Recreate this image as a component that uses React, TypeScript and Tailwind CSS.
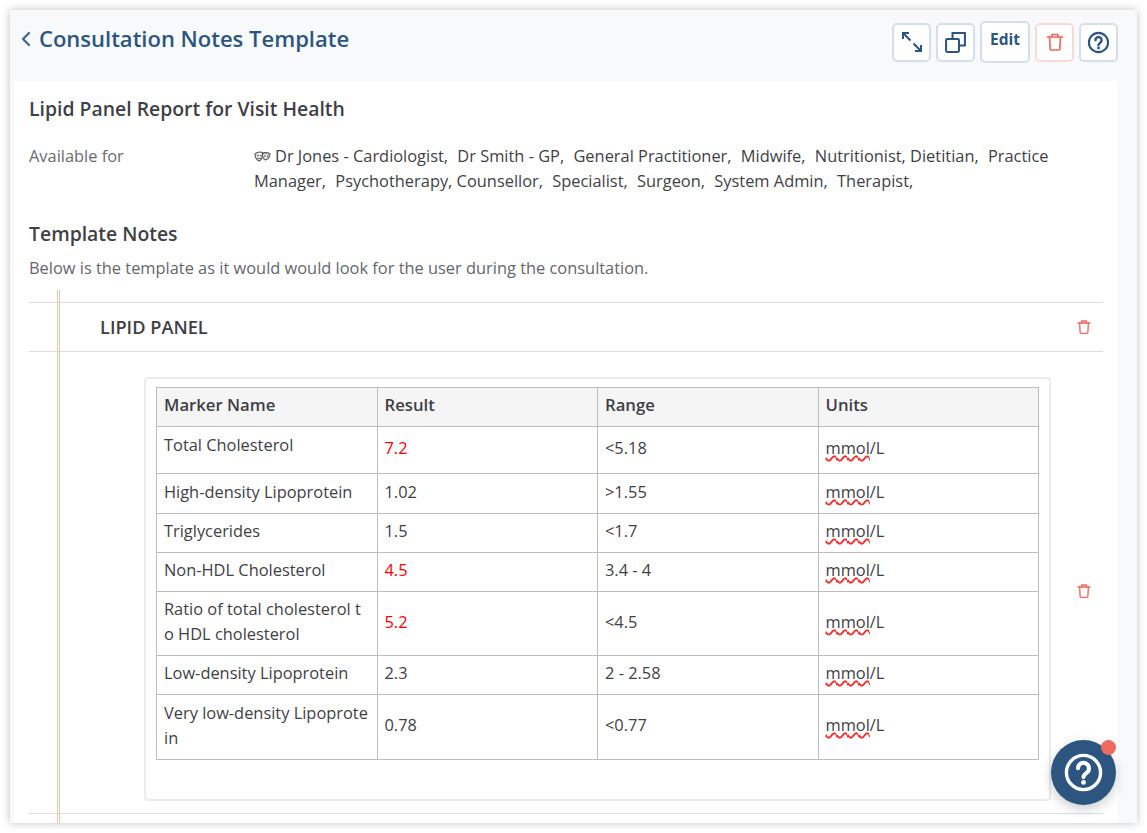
import { ChevronLeft } from 'lucide-react';

const MARKERS = [
  { name: 'Total Cholesterol', result: '7.2', range: '<5.18', high: true, rowClass: 'h-[47px]', top: true },
  { name: 'High-density Lipoprotein', result: '1.02', range: '>1.55', rowClass: 'h-[40px]' },
  { name: 'Triglycerides', result: '1.5', range: '<1.7', rowClass: 'h-[39px]' },
  { name: 'Non-HDL Cholesterol', result: '4.5', range: '3.4 - 4', high: true, rowClass: 'h-[39px]' },
  { name: 'Ratio of total cholesterol to HDL cholesterol', result: '5.2', range: '<4.5', high: true, rowClass: 'h-[64px]' },
  { name: 'Low-density Lipoprotein', result: '2.3', range: '2 - 2.58', rowClass: 'h-[39px]' },
  { name: 'Very low-density Lipoprotein', result: '0.78', range: '<0.77', rowClass: 'h-[65px]' },
];

const ROLES = [
  'Dr Jones - Cardiologist,',
  'Dr Smith - GP,',
  'General Practitioner,',
  'Midwife,',
  'Nutritionist, Dietitian,',
  'Practice Manager,',
  'Psychotherapy, Counsellor,',
  'Specialist,',
  'Surgeon,',
  'System Admin,',
  'Therapist,',
];

function MasksIcon() {
  return (
    <svg width="17" height="12" viewBox="0 0 17 12" fill="none" stroke="#555" strokeWidth="1.1" className="mr-[4px] inline-block align-[-1px]">
      <path d="M8 3c2-1.500 5.500-1.500 8 0-.5 3-2 5.500-4.500 6C9.500 8.500 8.500 6 8 3z" fill="#ddd" />
      <path d="M1 3c2-1.800 5-2.300 7.500-1.500.3 3-.6 6.500-3 8.500C2.800 9.500 1.200 6.500 1 3z" fill="#eee" />
      <path d="M2.800 4.800l2-.3M6 4.500l1.500-.3M3.500 7.200c1 .5 2 .4 3-.3M10 5h1.500M13 5h1.500" />
    </svg>
  );
}

function TrashIcon({ size, className = '' }: { size: number; className?: string }) {
  return (
    <svg width={size} height={size} viewBox="0 0 20 20" fill="none" stroke="currentColor" strokeWidth="1.700" strokeLinejoin="round" strokeLinecap="round" className={className}>
      <path d="M2.500 5h15" />
      <path d="M7 5V2.500h6V5" />
      <path d="M4.500 5l.7 12c0 .6.5 1 1 1h7.600c.5 0 1-.4 1-1l.7-12" />
    </svg>
  );
}

function ExpandIcon() {
  return (
    <svg width="22" height="22" viewBox="0 0 22 22" fill="none" stroke="currentColor" strokeWidth="2">
      <path d="M2 8V2h6M2 2l7.500 7.500" />
      <path d="M20 14v6h-6M20 20l-7.500-7.500" />
    </svg>
  );
}

function CopyIcon() {
  return (
    <svg width="21" height="21" viewBox="0 0 19.500 19.500" fill="none" stroke="currentColor" strokeWidth="1.900">
      <rect x="1" y="6.500" width="12" height="12" rx="1" />
      <path d="M7 6.500V1h11.500v11.500H13" />
    </svg>
  );
}

function HelpIcon({ size, stroke }: { size: number; stroke: number }) {
  return (
    <svg width={size} height={size} viewBox="0 0 24 24" fill="none" stroke="currentColor" strokeWidth={stroke} strokeLinecap="round">
      <circle cx="12" cy="12" r="10" />
      <path d="M8.800 9.500a3.200 3.200 0 1 1 5 2.700c-1 .7-1.800 1.300-1.800 2.500" strokeWidth={stroke + 0.4} />
      <path d="M12 17.800v.01" strokeWidth={stroke + 0.8} />
    </svg>
  );
}

function ToolButton({ children, className = '' }: { children: React.ReactNode; className?: string }) {
  return (
    <button className={`flex h-[39px] w-[39px] items-center justify-center rounded-[5px] border-2 bg-white text-[#2c5680] ${className}`}>
      {children}
    </button>
  );
}

export default function App() {
  return (
    <div className="min-h-[833px] bg-white p-[10px] font-['Open_Sans','Noto_Sans',sans-serif] text-[#3f3f46]">
      <div className="h-[813px] overflow-hidden bg-[#f8f9fb] pr-[19px] pl-[4px] shadow-[0_0_8px_rgba(0,0,0,0.25)]">
        <div className="-ml-[4px] flex h-[71px] items-start justify-between pl-[4px]">
          <div className="mt-[14px] flex items-center">
            <ChevronLeft size={24} strokeWidth={2.300} className="text-[#44688f]" />
            <h1 className="ml-[1px] text-[22px] leading-[29px] font-semibold text-[#2c5680]">Consultation Notes Template</h1>
          </div>
          <div className="mt-[11px] flex items-center gap-[5px]">
            <ToolButton className="border-[#d5dfea]">
              <ExpandIcon />
            </ToolButton>
            <ToolButton className="border-[#d5dfea]">
              <CopyIcon />
            </ToolButton>
            <button className="flex h-[42px] w-[50px] items-center justify-center rounded-[5px] border-2 border-[#d5dfea] bg-white pb-[5px] text-[15.500px] font-bold text-[#2c5680]">
              Edit
            </button>
            <ToolButton className="border-[#fdd9d6]">
              <TrashIcon size={20} className="text-[#ee6a5f]" />
            </ToolButton>
            <ToolButton className="border-[#d5dfea]">
              <HelpIcon size={23} stroke={2.200} />
            </ToolButton>
          </div>
        </div>

        <div className="relative h-[742px] bg-white px-[15px]">
          <h2 className="pt-[14px] text-[19.400px] leading-[27px] font-semibold">Lipid Panel Report for Visit Health</h2>

          <div className="mt-[21px] flex text-[16.400px] leading-[25px]">
            <div className="w-[225px] shrink-0 text-[#6b6b70]">Available for</div>
            <div className="flex-1">
              <MasksIcon />
              {ROLES.map((role) => (
                <span key={role} className="mr-[5px]">{role} </span>
              ))}
            </div>
          </div>

          <h2 className="mt-[27px] text-[19.400px] leading-[27px] font-semibold">Template Notes</h2>
          <p className="mt-[9px] text-[16.400px] leading-[24px] text-[#66666b]">
            Below is the template as it would would look for the user during the consultation.
          </p>

          <div className="absolute top-[209px] bottom-0 left-[43px] w-[3px] border-x border-[#e6c6a4]" />

          <div className="mt-[22px] flex h-[50px] items-center justify-between border-y border-[#d9dfe5] pr-[11px] pl-[71px]">
            <span className="pt-[1px] text-[18.200px] font-semibold">LIPID PANEL</span>
            <TrashIcon size={16} className="text-[#ee6a5f]" />
          </div>

          <div className="flex border-b border-[#d9dfe5] pt-[25px] pb-[12px] pl-[115px]">
            <div className="h-[424px] w-[907px] rounded-[4px] border-2 border-[#e9edf2] px-[10px] pt-[8px]">
              <table className="w-[883px] table-fixed border-collapse text-[16.400px] leading-[25px] [word-break:break-all]">
                <thead>
                  <tr className="h-[39px] bg-[#f5f5f5] text-left text-[16.700px]">
                    {['Marker Name', 'Result', 'Range', 'Units'].map((h) => (
                      <th key={h} className="border border-[#bdbdbd] px-[7px] pb-[5px] font-semibold">{h}</th>
                    ))}
                  </tr>
                </thead>
                <tbody>
                  {MARKERS.map((m) => (
                    <tr key={m.name} className={m.rowClass}>
                      <td className={`border border-[#bdbdbd] px-[7px] ${m.top ? 'pt-[5px] align-top' : 'pb-[5px]'}`}>{m.name}</td>
                      <td className={`border border-[#bdbdbd] px-[7px] pb-[5px] ${m.high ? 'text-[#ff0000]' : ''}`}>{m.result}</td>
                      <td className="border border-[#bdbdbd] px-[7px] pb-[5px]">{m.range}</td>
                      <td className="border border-[#bdbdbd] px-[7px] pb-[5px]">
                        <span className="underline decoration-[#f03030] decoration-wavy decoration-[1.500px] underline-offset-1">mmol</span>/L
                      </td>
                    </tr>
                  ))}
                </tbody>
              </table>
            </div>
            <div className="mt-[206px] ml-[25px]">
              <TrashIcon size={16} className="text-[#ee6a5f]" />
            </div>
          </div>
        </div>
      </div>

      <button className="fixed top-[740px] left-[1051px] flex h-[65px] w-[65px] items-center justify-center rounded-full bg-[#2c5680] text-white shadow-[0_4px_12px_rgba(0,0,0,0.2)]">
        <HelpIcon size={41} stroke={2} />
        <span className="absolute top-0 right-0 h-[15px] w-[15px] rounded-full bg-[#ee6a5f]" />
      </button>
    </div>
  );
}
